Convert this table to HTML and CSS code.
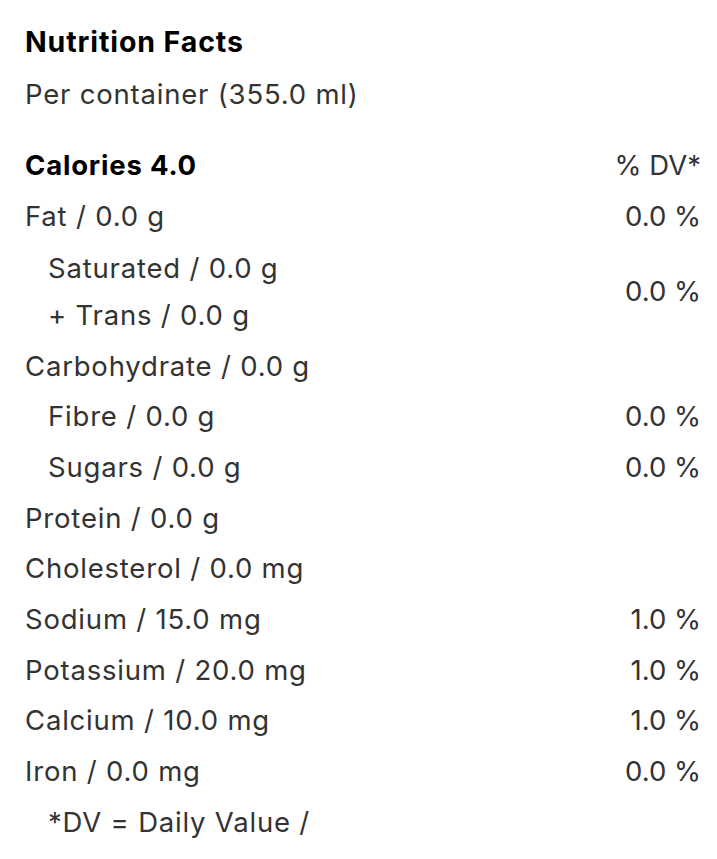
FILE: index.html
```html
<!DOCTYPE html>
<html>
<head>
<meta charset="utf-8">
<link rel="stylesheet" href="styles.css">
</head>
<body>
<section class="facts">
  <h2 class="title">Nutrition Facts</h2>
  <p class="serving">Per container (355.0 ml)</p>
  <div class="table">
    <div class="row head"><span class="name">Calories 4.0</span><span class="dv">% DV*</span></div>
    <div class="row"><span class="name">Fat / 0.0 g</span><span class="dv">0.0 %</span></div>
    <div class="row group">
      <div class="names">
        <span class="name sub">Saturated / 0.0 g</span>
        <span class="name sub">+ Trans / 0.0 g</span>
      </div>
      <span class="dv">0.0 %</span>
    </div>
    <div class="row"><span class="name">Carbohydrate / 0.0 g</span></div>
    <div class="row"><span class="name sub">Fibre / 0.0 g</span><span class="dv">0.0 %</span></div>
    <div class="row"><span class="name sub">Sugars / 0.0 g</span><span class="dv">0.0 %</span></div>
    <div class="row"><span class="name">Protein / 0.0 g</span></div>
    <div class="row"><span class="name">Cholesterol / 0.0 mg</span></div>
    <div class="row"><span class="name">Sodium / 15.0 mg</span><span class="dv">1.0 %</span></div>
    <div class="row"><span class="name">Potassium / 20.0 mg</span><span class="dv">1.0 %</span></div>
    <div class="row"><span class="name">Calcium / 10.0 mg</span><span class="dv">1.0 %</span></div>
    <div class="row"><span class="name">Iron / 0.0 mg</span><span class="dv">0.0 %</span></div>
    <div class="row"><span class="name sub">*DV = Daily Value /</span></div>
  </div>
</section>
</body>
</html>
```
FILE: styles.css
```css
html, body {
  margin: 0;
  padding: 0;
  background: #fff;
}
body {
  font-family: Inter, "Noto Sans", sans-serif;
  color: #333;
  font-size: 27.5px;
  letter-spacing: 0.8px;
}
.facts {
  padding: 17px 16px 0 25px;
}
.title {
  margin: 0;
  font-size: 28.5px;
  font-weight: 700;
  color: #000;
  line-height: 50px;
  letter-spacing: 0.9px;
}
.serving {
  margin: 0;
  line-height: 54px;
}
.table {
  margin-top: 19px;
  display: flex;
  flex-direction: column;
}
.row {
  display: flex;
  justify-content: space-between;
  align-items: center;
  height: 50.67px;
}
.row.head .name {
  font-weight: 700;
  color: #000;
}
.group {
  height: 99px;
  align-items: center;
}
.names {
  display: flex;
  flex-direction: column;
  padding-top: 2px;
}
.names .name {
  line-height: 47px;
}
.sub {
  padding-left: 23px;
}
.dv {
  text-align: right;
  letter-spacing: 0;
}
```
